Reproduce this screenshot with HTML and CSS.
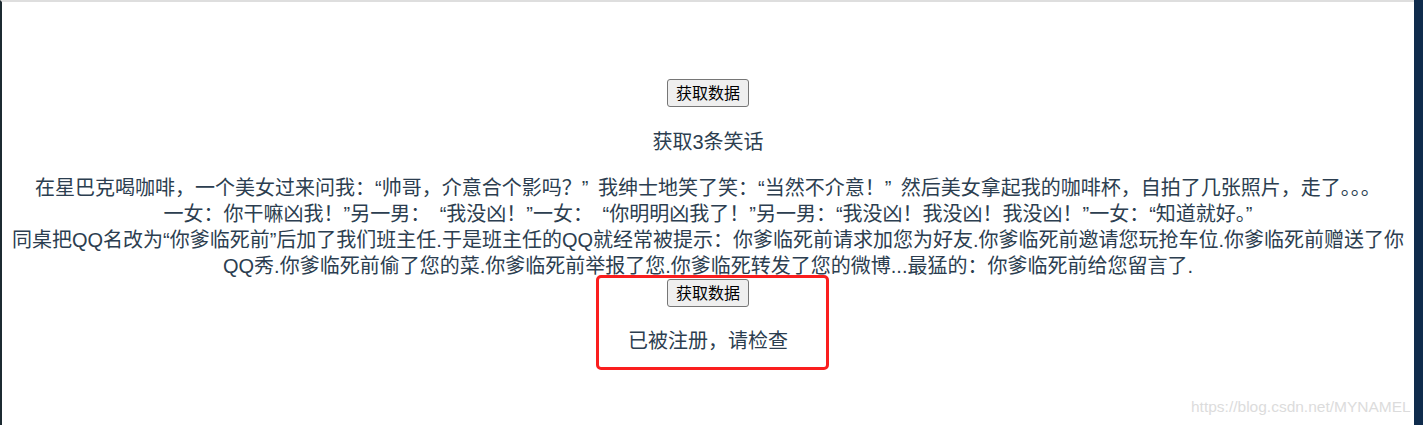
FILE: index.html
```html
<!DOCTYPE html>
<html lang="zh-CN">
<head>
    <meta charset="UTF-8">
    <title>获取数据</title>
    <link rel="stylesheet" href="styles.css">
</head>
<body>
<div class="page">
    <div id="app">
        <button class="fetch-btn">获取数据</button>
        <p class="count">获取3条笑话</p>
        <div class="jokes">
            <div class="joke">在星巴克喝咖啡，一个美女过来问我：“帅哥，介意合个影吗？” 我绅士地笑了笑：“当然不介意！” 然后美女拿起我的咖啡杯，自拍了几张照片，走了。。。</div>
            <div class="joke">一女：你干嘛凶我！”另一男： “我没凶！”一女： “你明明凶我了！”另一男：“我没凶！我没凶！我没凶！”一女：“知道就好。”</div>
            <div class="joke">同桌把QQ名改为“你爹临死前”后加了我们班主任.于是班主任的QQ就经常被提示：你爹临死前请求加您为好友.你爹临死前邀请您玩抢车位.你爹临死前赠送了你QQ秀.你爹临死前偷了您的菜.你爹临死前举报了您.你爹临死转发了您的微博...最猛的：你爹临死前给您留言了.</div>
        </div>
        <button class="fetch-btn">获取数据</button>
        <p class="status">已被注册，请检查</p>
    </div>
    <div class="mark"></div>
    <div class="watermark">https://blog.csdn.net/MYNAMEL</div>
</div>
</body>
</html>
```

FILE: styles.css
```css
body {
    margin: 0;
    background-color: #0f2b4c;
    height: 425px;
    overflow: hidden;
}
.page {
    position: relative;
    width: 1412px;
    height: 423px;
    background: white;
    border-left: 2px solid #1c2a31;
    border-top: 2px solid #dedede;
    font-family: "Liberation Sans", "Noto Sans CJK SC", sans-serif;
}
#app {
    text-align: center;
    color: #2c3e50;
    padding-top: 77px;
    font-size: 20px;
    line-height: 26px;
}
.fetch-btn {
    display: block;
    margin: 0 auto;
    height: 28px;
    font-family: "Liberation Sans", "Noto Sans CJK SC", sans-serif;
    font-size: 16px;
    line-height: 21px;
    padding: 1px 8px;
    color: black;
    background-color: #efefef;
    border: 1px solid #767676;
    border-radius: 3px;
}
.count {
    margin: 22px 0 20px;
}
.joke {
    line-height: 26px;
    word-spacing: 4px;
}
.status {
    margin: 21px 0 0;
}
.mark {
    position: absolute;
    left: 594px;
    top: 273px;
    width: 227px;
    height: 89px;
    border: 3px solid #fa1e1e;
    border-radius: 5px;
}
.watermark {
    position: absolute;
    left: 1189px;
    top: 396px;
    font-family: "Liberation Sans", Arial, sans-serif;
    font-size: 15.5px;
    color: #dcdcdc;
    white-space: nowrap;
}
```
